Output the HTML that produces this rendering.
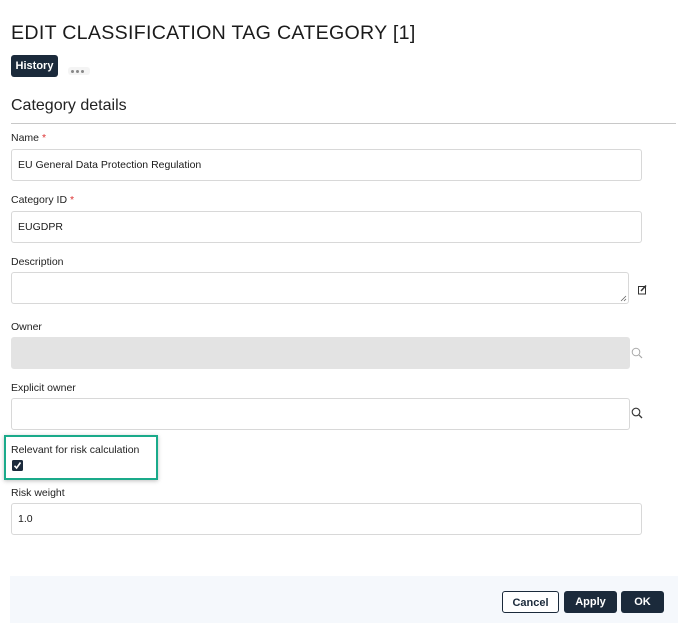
<!DOCTYPE html>
<html><head><style>
body{margin:0;width:682px;height:632px;background:#fff;font-family:"Liberation Sans",sans-serif;color:#1a1a1a;position:relative;overflow:hidden}
.a{position:absolute}
.lbl{position:absolute;left:11px;font-size:10.5px;color:#222}
.req{color:#d33}
.in{position:absolute;left:11px;width:630px;height:32px;border:1px solid #d8d8d8;border-radius:3px;background:#fff;font-size:10.5px;line-height:30px;padding-left:6px;box-sizing:border-box}
.btn{position:absolute;top:591px;height:22px;border-radius:3px;font-size:11px;font-weight:bold;line-height:22px;text-align:center;box-sizing:border-box}
</style></head><body>
<div class="a" style="left:11px;top:22px;font-size:19.6px;letter-spacing:0.3px;color:#1b1b1b">EDIT CLASSIFICATION TAG CATEGORY [1]</div>
<div class="a" style="left:11px;top:55px;width:47px;height:22px;background:#1b2a3b;border-radius:3px;color:#fff;font-size:11px;font-weight:bold;line-height:22px;text-align:center">History</div>
<div class="a" style="left:68px;top:67px;width:22px;height:8px;background:#f4f4f4;border-radius:3px"></div>
<div class="a" style="left:71px;top:70px;width:3px;height:3px;border-radius:50%;background:#888;box-shadow:5px 0 #888,10px 0 #888"></div>
<div class="a" style="left:11px;top:97px;font-size:16px;color:#222">Category details</div>
<div class="a" style="left:11px;top:123px;width:665px;height:1px;background:#c8c8c8"></div>
<div class="lbl" style="top:132px">Name <span class="req">*</span></div>
<div class="in" style="top:149px;width:631px">EU General Data Protection Regulation</div>
<div class="lbl" style="top:194px">Category ID <span class="req">*</span></div>
<div class="in" style="top:211px;width:631px">EUGDPR</div>
<div class="lbl" style="top:256px">Description</div>
<div class="in" style="top:272px;width:618px"></div>
<svg class="a" style="left:620px;top:295px" width="7" height="7"><path d="M1 6L6 1M4 6L6 4" stroke="#666" stroke-width="0.8"/></svg>
<svg class="a" style="left:637px;top:284px" width="11" height="11"><rect x="1.5" y="2.5" width="7" height="7.5" fill="none" stroke="#333"/><path d="M4 7L9 1.5" stroke="#333" stroke-width="1.5"/></svg>
<div class="lbl" style="top:321px">Owner</div>
<div class="in" style="top:337px;width:619px;background:#e3e3e3;border-color:#e3e3e3"></div>
<svg class="a" style="left:631px;top:347px" width="12" height="12"><circle cx="5" cy="5" r="3.8" fill="none" stroke="#aaa" stroke-width="1"/><path d="M8 8L11 11" stroke="#aaa" stroke-width="1.2"/></svg>
<div class="lbl" style="top:382px">Explicit owner</div>
<div class="in" style="top:398px;width:619px"></div>
<svg class="a" style="left:631px;top:407px" width="12" height="12"><circle cx="5" cy="5" r="3.8" fill="none" stroke="#333" stroke-width="1.1"/><path d="M8 8L11 11" stroke="#333" stroke-width="1.3"/></svg>
<div class="a" style="left:4px;top:435px;width:150px;height:41px;border:2px solid #1aaa8a;box-shadow:0 1px 4px rgba(0,0,0,.25)"></div>
<div class="lbl" style="top:444px">Relevant for risk calculation</div>
<svg class="a" style="left:12px;top:460px" width="11" height="11"><rect width="11" height="11" rx="1.5" fill="#1b2a3b"/><path d="M2.5 5.8L4.6 8L8.5 2.5" stroke="#fff" stroke-width="1.6" fill="none"/></svg>
<div class="lbl" style="top:487px">Risk weight</div>
<div class="in" style="top:503px;width:631px">1.0</div>
<div class="a" style="left:10px;top:576px;width:668px;height:47px;background:#f5f8fc"></div>
<div class="btn" style="left:502px;width:57px;border:1px solid #1b2a3b;background:#fff;color:#1b2a3b">Cancel</div>
<div class="btn" style="left:564px;width:53px;background:#1b2a3b;color:#fff">Apply</div>
<div class="btn" style="left:621px;width:43px;background:#1b2a3b;color:#fff">OK</div>
</body></html>
